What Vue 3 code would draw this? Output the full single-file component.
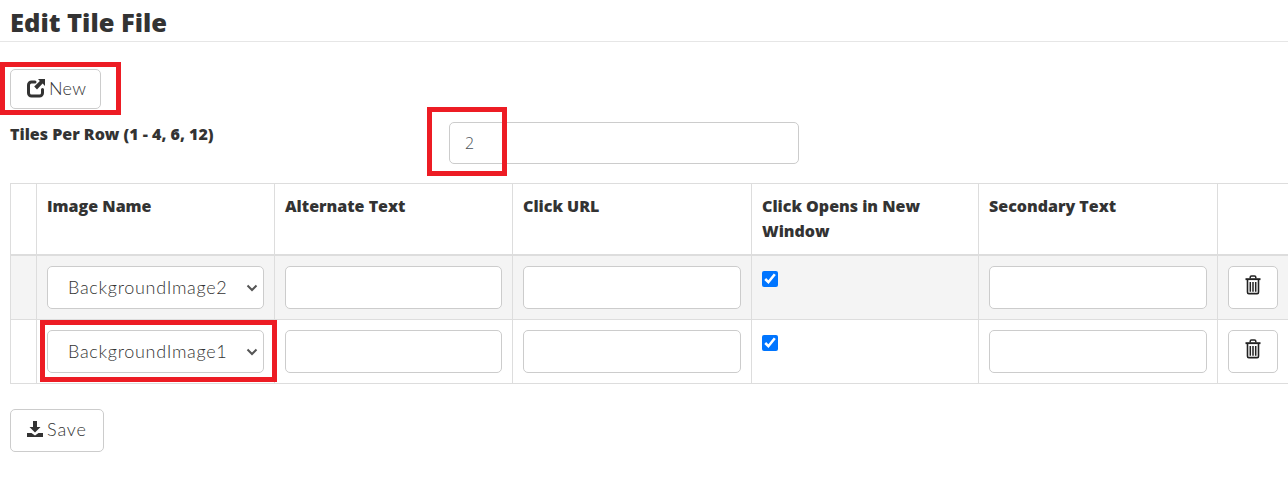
<template>
  <main class="page">
    <h1 class="title">Edit Tile File</h1>

    <button type="button" class="btn new-btn">
      <svg class="btn-icon" viewBox="0 0 20 20" width="20" height="20">
        <path d="M9 4H5.500A3 3 0 0 0 2.500 7v8a3 3 0 0 0 3 3h8a3 3 0 0 0 3-3v-3.500" fill="none" stroke="#333" stroke-width="3" stroke-linecap="round" />
        <path d="M12 1h7v7l-2.400-2.400-5.600 5.800-2.800-2.800 5.700-5.700z" fill="#333" />
      </svg>
      New
    </button>

    <div class="tiles-row">
      <label class="tiles-label">Tiles Per Row (1 - 4, 6, 12)</label>
      <input class="field tiles-input" type="text" value="2" />
    </div>

    <table class="tile-table">
      <colgroup>
        <col style="width: 26px" />
        <col style="width: 238px" />
        <col style="width: 238px" />
        <col style="width: 239px" />
        <col style="width: 227px" />
        <col style="width: 239px" />
        <col style="width: 71px" />
      </colgroup>
      <thead>
        <tr>
          <th></th>
          <th>Image Name</th>
          <th>Alternate Text</th>
          <th>Click URL</th>
          <th>Click Opens in New Window</th>
          <th>Secondary Text</th>
          <th></th>
        </tr>
      </thead>
      <tbody>
        <tr v-for="row in rows" :key="row.image">
          <td></td>
          <td>
            <div class="select-wrap">
              <select class="field image-select">
                <option>{{ row.image }}</option>
              </select>
              <svg class="chevron" viewBox="0 0 12 8" width="12" height="8">
                <path d="M1.500 1.500 6 6l4.500-4.500" fill="none" stroke="#555" stroke-width="2" />
              </svg>
            </div>
          </td>
          <td><input class="field" type="text" /></td>
          <td><input class="field" type="text" /></td>
          <td><input class="check" type="checkbox" checked /></td>
          <td><input class="field" type="text" /></td>
          <td>
            <button type="button" class="btn trash-btn" aria-label="Delete">
              <svg viewBox="0 0 16 20" width="16" height="20">
                <path d="M5.200 3.500V2.300c0-.7.500-1.300 1.300-1.300h3c.8 0 1.300.6 1.300 1.300v1.200" fill="none" stroke="#222" stroke-width="1.500" />
                <path d="M.5 3.200h15v1.900H.5z" fill="#222" />
                <path d="M2.500 5v12.200c0 .8.500 1.400 1.300 1.400h8.400c.8 0 1.300-.6 1.300-1.400V5" fill="none" stroke="#222" stroke-width="1.600" />
                <path d="M5.300 7v9.800M8 7v9.800M10.700 7v9.800" fill="none" stroke="#222" stroke-width="1.500" />
              </svg>
            </button>
          </td>
        </tr>
      </tbody>
    </table>

    <button type="button" class="btn save-btn">
      <svg class="btn-icon" viewBox="0 0 18 18" width="18" height="18">
        <path d="M7 1h4v6h3.500L9 12.500 3.500 7H7z" fill="#333" />
        <path d="M1 13h4.500L9 15.500l3.500-2.500H17v4H1z" fill="#333" />
      </svg>
      Save
    </button>

    <span class="mark mark-new"></span>
    <span class="mark mark-count"></span>
    <span class="mark mark-select"></span>
  </main>
</template>

<script setup>
const rows = [
  { image: 'BackgroundImage2' },
  { image: 'BackgroundImage1' }
]
</script>

<style>
html,
body {
  margin: 0;
  overflow: hidden;
  background: #fff;
}
</style>

<style scoped>
.page {
  position: relative;
  height: 478px;
  overflow: hidden;
  padding: 0 0 0 10px;
  box-sizing: border-box;
  color: #333;
  font-family: Lato, "Liberation Sans", sans-serif;
  font-size: 16px;
}

.title {
  height: 42px;
  margin: 0 0 27px -10px;
  padding: 8px 0 0 10px;
  box-sizing: border-box;
  border-bottom: 1px solid #e6e6e6;
  font-family: "Open Sans", sans-serif;
  font-size: 25.500px;
  font-weight: 800;
  line-height: 28px;
}

.btn {
  display: flex;
  align-items: center;
  box-sizing: border-box;
  background: #fff;
  border: 1px solid #ccc;
  border-radius: 5px;
  color: #333;
  font-family: inherit;
  font-size: 18px;
  font-weight: 300;
  letter-spacing: 0.3px;
}

.btn-icon {
  margin-right: 3px;
}

.new-btn {
  width: 91px;
  height: 40px;
  padding: 0 0 3px 15px;
}

.tiles-row {
  display: grid;
  grid-template-columns: 439px 350px;
  margin-top: 13px;
}

.tiles-label {
  font-family: "Open Sans", sans-serif;
  font-weight: 800;
  line-height: 24px;
}

.field {
  display: block;
  width: 100%;
  height: 43px;
  box-sizing: border-box;
  background: #fff;
  border: 1px solid #ccc;
  border-radius: 5px;
  color: #333;
  font-family: inherit;
  font-size: 18px;
  font-weight: 300;
}

.tiles-input {
  height: 42px;
  padding: 0 15px;
  color: #495057;
  font-family: "Open Sans", sans-serif;
  font-size: 16px;
}

.tile-table {
  width: 1278px;
  margin-top: 19px;
  border-collapse: collapse;
  table-layout: fixed;
}

.tile-table th,
.tile-table td {
  padding: 10px;
  border: 1px solid #ddd;
  vertical-align: top;
}

.tile-table th {
  height: 71px;
  box-sizing: border-box;
  border-bottom-width: 2px;
  font-family: "Open Sans", sans-serif;
  font-weight: 800;
  line-height: 25px;
  text-align: left;
}

.tile-table tbody tr:nth-child(odd) {
  background: #f4f4f4;
}

.select-wrap {
  position: relative;
}

.image-select {
  padding: 0 37px 2px 20px;
  appearance: none;
  letter-spacing: 0.7px;
}

.chevron {
  position: absolute;
  top: 18px;
  right: 6px;
}

.check {
  display: block;
  width: 16px;
  height: 16px;
  margin: 5px 0 0;
}

.trash-btn {
  justify-content: center;
  width: 50px;
  height: 43px;
  padding: 0 0 6px;
}

.save-btn {
  width: 94px;
  height: 43px;
  margin-top: 25px;
  padding: 0 0 3px 15px;
  letter-spacing: 0.9px;
}

.mark {
  position: absolute;
  box-sizing: border-box;
  border: 5px solid #ed1c24;
}

.mark-new {
  top: 62px;
  left: 0;
  width: 121px;
  height: 53px;
}

.mark-count {
  top: 107px;
  left: 427px;
  width: 80px;
  height: 69px;
}

.mark-select {
  top: 320px;
  left: 40px;
  width: 237px;
  height: 62px;
}
</style>
